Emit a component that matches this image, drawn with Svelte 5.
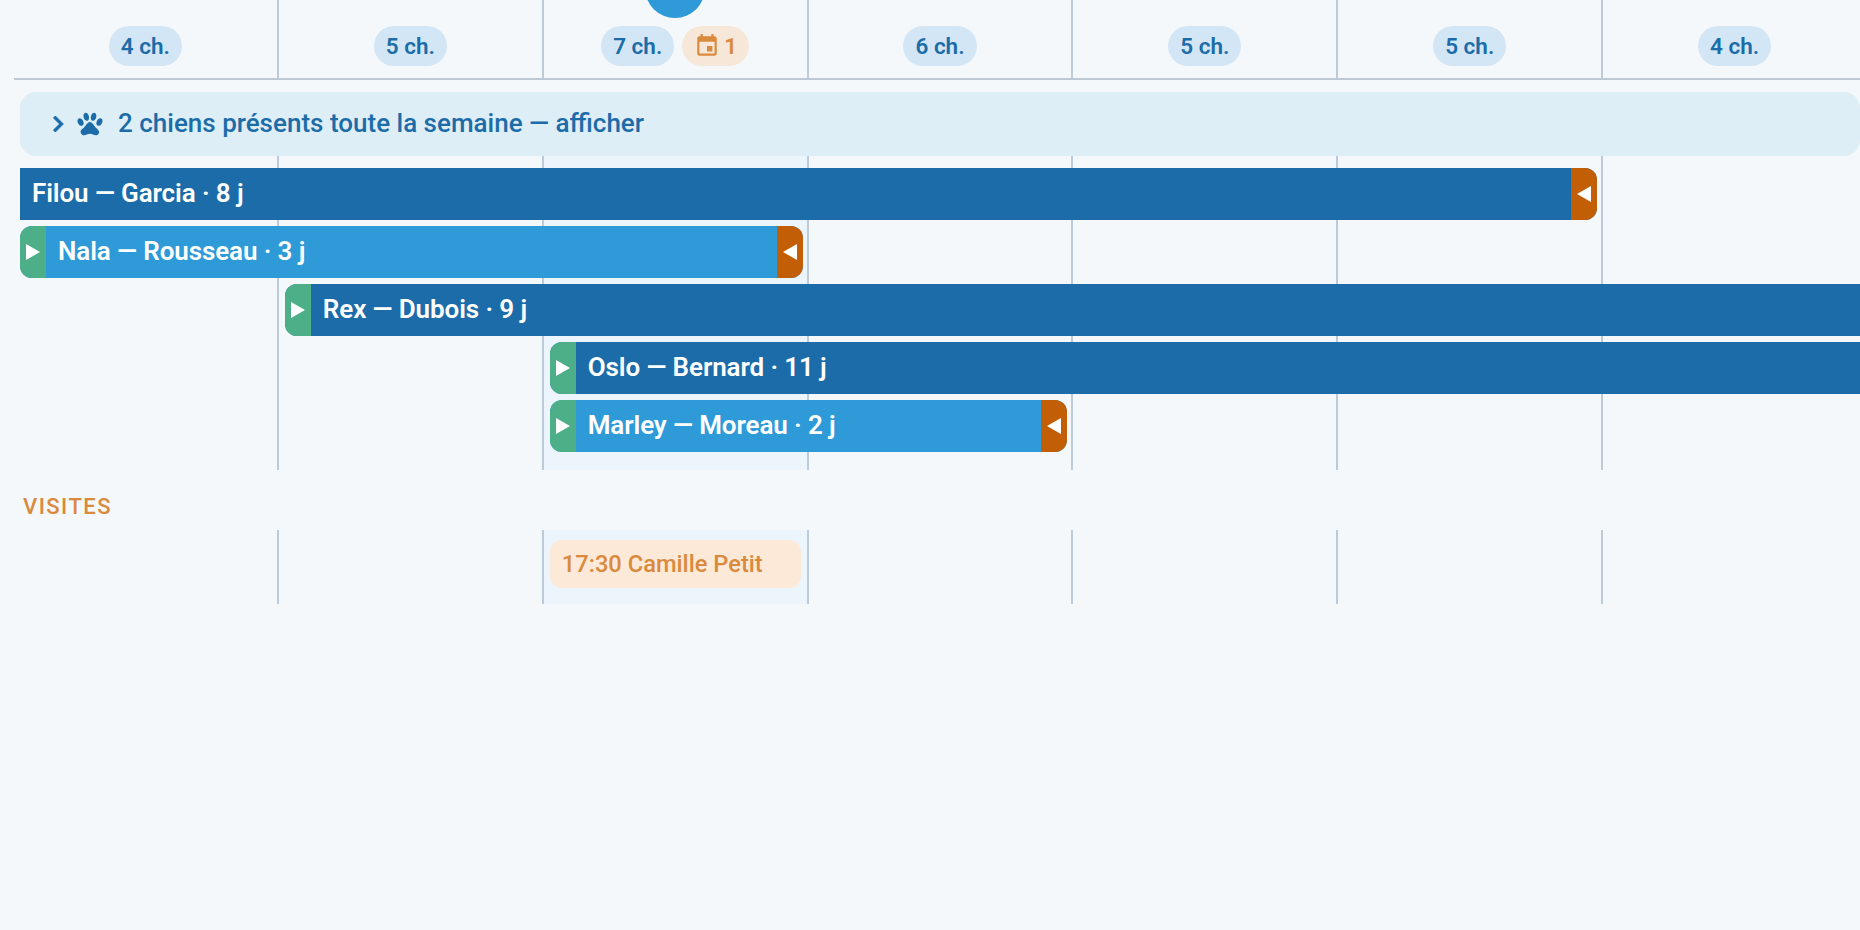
<script lang="ts">
	const days = [
		{ guests: 4 },
		{ guests: 5 },
		{ guests: 7, visits: 1, today: true },
		{ guests: 6 },
		{ guests: 5 },
		{ guests: 5 },
		{ guests: 4 }
	];

	// start/end are 1-based day columns, end is exclusive; open bars run past the week
	const stays = [
		{ label: 'Filou — Garcia · 8 j', start: 1, end: 7, tone: 'dark', arrives: false, leaves: true },
		{ label: 'Nala — Rousseau · 3 j', start: 1, end: 4, tone: 'light', arrives: true, leaves: true },
		{ label: 'Rex — Dubois · 9 j', start: 2, end: 9, tone: 'dark', arrives: true, leaves: false },
		{ label: 'Oslo — Bernard · 11 j', start: 3, end: 9, tone: 'dark', arrives: true, leaves: false },
		{ label: 'Marley — Moreau · 2 j', start: 3, end: 5, tone: 'light', arrives: true, leaves: true }
	];
</script>

<div class="page">
	<span class="today-dot"></span>

	<div class="week head">
		{#each days as day}
			<div class="head-cell">
				<span class="pill">{day.guests} ch.</span>
				{#if day.visits}
					<span class="pill visit">
						<svg viewBox="0 0 24 24" width="26" height="26"><path d="M17 12h-5v5h5v-5zM16 1v2H8V1H6v2H5c-1.11 0-1.99.9-1.99 2L3 19c0 1.1.89 2 2 2h14c1.1 0 2-.9 2-2V5c0-1.1-.9-2-2-2h-1V1h-2zm3 18H5V8h14v11z" /></svg>
						{day.visits}
					</span>
				{/if}
			</div>
		{/each}
	</div>

	<button type="button" class="banner">
		<svg class="chevron" viewBox="0 0 24 24" width="32" height="32"><path d="M8.59,16.58L13.17,12L8.59,7.41L10,6L16,12L10,18L8.59,16.58Z" /></svg>
		<svg class="paw" viewBox="0 0 24 24" width="30" height="30"><path d="M8.35,3C9.53,2.83 10.78,4.12 11.14,5.9C11.5,7.67 10.85,9.25 9.67,9.43C8.5,9.61 7.24,8.32 6.87,6.54C6.5,4.77 7.17,3.19 8.35,3M15.5,3C16.69,3.19 17.35,4.77 17,6.54C16.62,8.32 15.37,9.61 14.19,9.43C13,9.25 12.35,7.67 12.72,5.9C13.08,4.12 14.33,2.83 15.5,3M3,7.6C4.14,7.11 5.69,8 6.5,9.55C7.26,11.13 7,12.79 5.87,13.28C4.74,13.77 3.2,12.89 2.41,11.32C1.62,9.75 1.9,8.08 3,7.6M21,7.6C22.1,8.08 22.38,9.75 21.59,11.32C20.8,12.89 19.26,13.77 18.13,13.28C17,12.79 16.74,11.13 17.5,9.55C18.31,8 19.86,7.11 21,7.6M19.33,18.38C19.37,19.32 18.65,20.36 17.79,20.75C16,21.57 13.88,19.87 11.89,19.87C9.9,19.87 7.76,21.64 6,20.75C5,20.26 4.31,18.96 4.44,17.88C4.62,16.39 6.41,15.59 7.47,14.5C8.88,13.09 9.88,10.44 11.89,10.44C13.89,10.44 14.95,13.05 16.3,14.5C17.41,15.72 19.26,16.75 19.33,18.38Z" /></svg>
		<span class="banner-text">2 chiens présents toute la semaine — afficher</span>
	</button>

	<div class="week stays">
		{#each days as day, i}
			<div class="day" class:today={day.today} style="grid-column: {i + 1}"></div>
		{/each}
		{#each stays as stay, i}
			<div
				class="bar {stay.tone}"
				class:open={stay.end > 8}
				class:arrives={stay.arrives}
				class:leaves={stay.leaves}
				style="grid-column: {stay.start} / {Math.min(stay.end, 8)}; grid-row: {i + 1}"
			>
				{#if stay.arrives}
					<span class="tag in"><svg viewBox="0 0 14 16" width="14" height="16"><polygon points="0,0 14,8 0,16" /></svg></span>
				{/if}
				<span class="name">{stay.label}</span>
				{#if stay.leaves}
					<span class="tag out"><svg viewBox="0 0 14 16" width="14" height="16"><polygon points="14,0 0,8 14,16" /></svg></span>
				{/if}
			</div>
		{/each}
	</div>

	<h3 class="section">Visites</h3>

	<div class="week visits">
		{#each days as day}
			<div class="day" class:today={day.today}>
				{#if day.visits}
					<div class="visit-chip">17:30 Camille Petit</div>
				{/if}
			</div>
		{/each}
	</div>
</div>

<style>
	:global(body) {
		background: #f4f8fb;
	}
	.page {
		position: relative;
		width: 1860px;
		height: 930px;
		overflow: hidden;
		background: #f4f8fb;
		font-family: Roboto, 'Liberation Sans', sans-serif;
		font-weight: 500;
	}
	.today-dot {
		position: absolute;
		left: 645px;
		top: -42px;
		width: 60px;
		height: 60px;
		border-radius: 50%;
		background: #2e9ad8;
	}
	.week {
		display: grid;
		grid-template-columns: repeat(7, 264.86px);
		margin-left: 14px;
		width: 1854px;
	}
	.head {
		height: 78px;
		border-bottom: 2px solid #bcc8d3;
	}
	.head-cell {
		display: flex;
		justify-content: center;
		align-items: flex-start;
		gap: 8px;
		padding-top: 26px;
		border-right: 2px solid #bccbd9;
		box-sizing: border-box;
	}
	.pill {
		display: inline-flex;
		align-items: center;
		justify-content: center;
		height: 40px;
		padding: 0 12px;
		border-radius: 20px;
		background: #d3e6f5;
		color: #1b6ca8;
		font-size: 22.5px;
		font-weight: 600;
		white-space: nowrap;
	}
	.pill.visit {
		gap: 4px;
		background: #f6e7d9;
		color: #d98a3d;
	}
	.pill.visit svg {
		fill: currentColor;
	}
	.banner {
		display: flex;
		align-items: center;
		width: 1840px;
		height: 64px;
		margin: 12px 0 0 20px;
		padding: 0 0 0 22px;
		border: none;
		border-radius: 16px;
		background: #deeef7;
		color: #1b6ca8;
		font: inherit;
		font-size: 26px;
		text-align: left;
	}
	.banner svg {
		fill: currentColor;
		flex: none;
	}
	.banner .chevron {
		stroke: currentColor;
		stroke-width: 0.7;
	}
	.banner .paw {
		margin: 0 13px 0 1px;
	}
	.banner-text {
		padding-bottom: 2px;
	}
	.stays {
		grid-template-rows: repeat(5, 52px);
		row-gap: 6px;
		padding: 12px 0 18px;
	}
	.day {
		border-right: 2px solid #bccbd9;
		box-sizing: border-box;
	}
	.stays .day {
		grid-row: 1 / -1;
		margin: -12px 0 -18px;
	}
	.day.today {
		background: #edf5fc;
	}
	.bar {
		display: flex;
		align-items: stretch;
		height: 52px;
		margin: 0 6px;
		overflow: hidden;
		color: #fff;
		font-size: 26px;
		font-weight: 600;
		z-index: 1;
	}
	.bar.dark {
		background: #1b6ca8;
	}
	.bar.light {
		background: #2e9ad8;
	}
	.bar.open {
		margin-right: 0;
	}
	.bar.arrives {
		border-top-left-radius: 12px;
		border-bottom-left-radius: 12px;
	}
	.bar.leaves {
		border-top-right-radius: 12px;
		border-bottom-right-radius: 12px;
	}
	.name {
		flex: 1;
		align-self: center;
		padding: 0 0 2px 12px;
		white-space: nowrap;
		letter-spacing: -0.1px;
	}
	.tag {
		display: flex;
		align-items: center;
		justify-content: center;
		width: 26px;
	}
	.tag svg {
		fill: #fff;
	}
	.tag.in {
		background: #4caf87;
	}
	.tag.out {
		background: #c25e05;
	}
	.section {
		margin: 25px 0 0 23px;
		height: 35px;
		color: #d98a3d;
		font-size: 22px;
		font-weight: 500;
		letter-spacing: 1.45px;
		line-height: 24px;
		text-transform: uppercase;
	}
	.visits {
		height: 74px;
	}
	.visit-chip {
		display: flex;
		align-items: center;
		height: 48px;
		margin: 10px 6px 0;
		padding: 0 12px;
		border-radius: 12px;
		background: #fde9d8;
		color: #d98a3d;
		font-size: 23.7px;
	}
</style>
